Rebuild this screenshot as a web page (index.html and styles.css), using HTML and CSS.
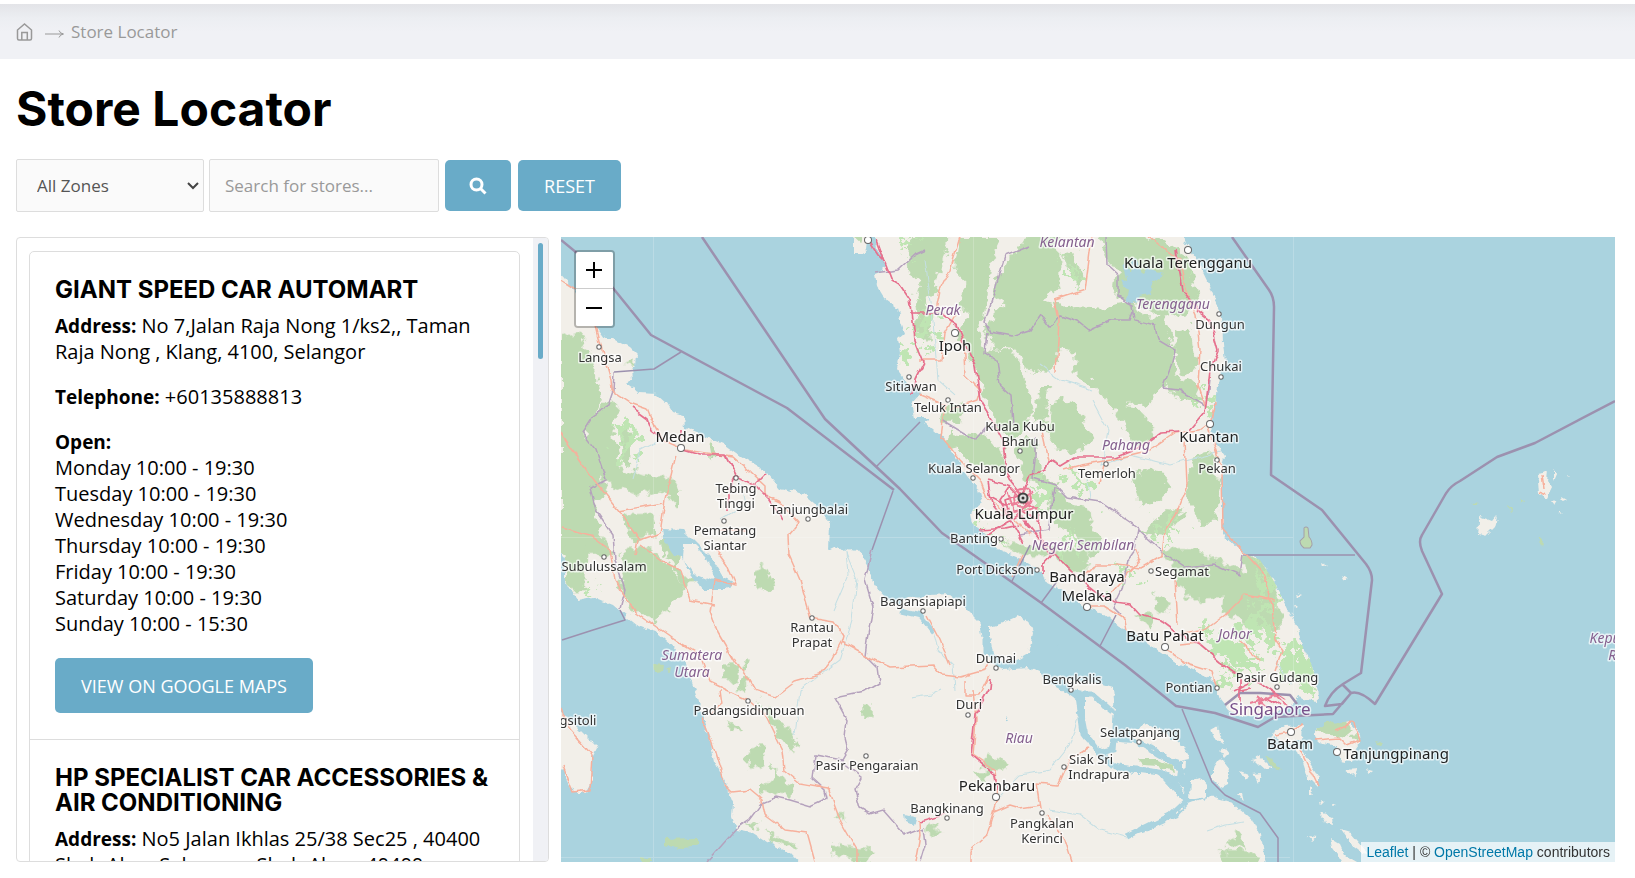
FILE: index.html
```html
<!DOCTYPE html>
<html lang="en">
<head>
<meta charset="utf-8">
<title>Store Locator</title>
<link rel="stylesheet" href="styles.css">
</head>
<body>
<nav class="breadcrumb" aria-label="Breadcrumb">
  <a class="home" href="#" aria-label="Home"><svg width="18" height="18" viewBox="0 0 18 18"><path d="M1.500 7 8.500 1l7 6v8.500q0 1.500-1.500 1.500H3q-1.500 0-1.500-1.500zM5.800 17V9.500h5.500V17"/></svg></a>
  <svg class="arrow" width="20" height="10" viewBox="0 0 20 10"><path d="M0 5h18M14 1.500Q15 4.500 18.500 5 15 5.500 14 8.500"/></svg>
  <a href="#">Store Locator</a>
</nav>
<main class="page">
  <h1>Store Locator</h1>
  <form class="filters">
    <div class="select-wrap">
      <select aria-label="Zone"><option>All Zones</option></select>
      <svg width="12" height="8" viewBox="0 0 12 8"><path d="m1 1 5 5 5-5"/></svg>
    </div>
    <input class="search" type="text" aria-label="Search" placeholder="Search for stores...">
    <button class="btn btn-search" type="button" aria-label="Search"><svg width="18" height="18" viewBox="0 0 18 18"><circle cx="7.500" cy="7.500" r="5.500"/><path d="m11.500 11.500 5 5"/></svg></button>
    <button class="btn btn-reset" type="reset">RESET</button>
  </form>
  <div class="locator">
    <section class="stores">
      <div class="store-scroll">
        <div class="store-list">
          <article class="store">
            <h2>GIANT SPEED CAR AUTOMART</h2>
            <p><b>Address:</b> No 7,Jalan Raja Nong 1/ks2,, Taman Raja Nong , Klang, 4100, Selangor</p>
            <p><b>Telephone:</b> +60135888813</p>
            <p><b>Open:</b><br>Monday 10:00 - 19:30<br>Tuesday 10:00 - 19:30<br>Wednesday 10:00 - 19:30<br>Thursday 10:00 - 19:30<br>Friday 10:00 - 19:30<br>Saturday 10:00 - 19:30<br>Sunday 10:00 - 15:30</p>
            <a class="btn btn-map" href="#">VIEW ON GOOGLE MAPS</a>
          </article>
          <article class="store">
            <h2>HP SPECIALIST CAR ACCESSORIES &amp; AIR CONDITIONING</h2>
            <p><b>Address:</b> No5 Jalan Ikhlas 25/38 Sec25 , 40400 Shah Alam Selangor , Shah Alam, 40400, Selangor</p>
          </article>
        </div>
      </div>
      <div class="track"><div class="thumb"></div></div>
    </section>
    <section class="map" aria-label="Map">
      <svg class="tiles" viewBox="561 237 1054 625" preserveAspectRatio="xMidYMid slice">
        <defs>
          <filter id="coast" x="-5%" y="-5%" width="110%" height="110%"><feTurbulence type="fractalNoise" baseFrequency=".12" numOctaves="3" seed="4"/><feDisplacementMap in="SourceGraphic" scale="7" xChannelSelector="R" yChannelSelector="G"/></filter>
          <filter id="wood" x="-5%" y="-5%" width="110%" height="110%"><feTurbulence type="fractalNoise" baseFrequency=".09" numOctaves="3" seed="9"/><feDisplacementMap in="SourceGraphic" scale="16" xChannelSelector="R" yChannelSelector="G"/></filter>
          <filter id="patchy" x="-5%" y="-5%" width="110%" height="110%"><feTurbulence type="fractalNoise" baseFrequency=".09" numOctaves="4" seed="5"/><feDisplacementMap in="SourceGraphic" scale="50" xChannelSelector="R" yChannelSelector="G"/></filter>
          <filter id="road" x="-5%" y="-5%" width="110%" height="110%"><feTurbulence type="fractalNoise" baseFrequency=".08" numOctaves="2" seed="2"/><feDisplacementMap in="SourceGraphic" scale="6" xChannelSelector="R" yChannelSelector="G"/></filter>
          <clipPath id="land">
            <path id="sumatra" d="M555 268 575 290 597 328 605 339 613 339 630 348 636 354 635 366 632 369 633 379 626 384 630 388 640 393 657 394 667 403 673 413 683 416 684 428 703 436 723 444 740 456 757 466 767 473 780 488 803 494 820 508 830 523 829 550 837 546 845 553 850 549 858 550 868 567 875 587 885 598 900 604 907 597 950 595 960 603 980 623 983 640 986 653 994 664 1003 669 1027 667 1040 673 1052 685 1067 693 1077 700 1078 713 1083 737 1097 753 1113 768 1133 774 1157 774 1170 783 1183 800 1185 807 1167 817 1140 828 1127 837 1153 828 1177 817 1190 803 1210 796 1233 803 1253 820 1260 836 1266 870 806 870 790 853 767 842 753 833 737 830 732 817 733 803 725 783 715 763 710 740 703 717 697 697 690 677 683 660 673 647 657 633 637 625 627 617 613 605 593 597 577 600 565 582 565 560 555 545Z"/>
            <path id="malaya" d="M875 230 877 249 885 261 883 271 875 274 877 286 885 299 897 308 900 319 905 333 898 339 900 353 897 369 907 383 918 389 920 394 912 403 915 418 930 418 925 423 940 436 953 453 967 476 978 489 982 503 970 513 972 523 988 536 1000 550 1023 560 1043 573 1047 583 1067 593 1083 607 1103 613 1120 627 1135 633 1153 647 1177 663 1200 673 1215 683 1220 700 1228 710 1237 716 1262 716 1290 708 1297 697 1307 700 1318 702 1317 683 1310 660 1302 645 1298 630 1287 607 1273 580 1260 560 1243 553 1222 533 1222 503 1222 476 1225 456 1213 439 1212 416 1215 403 1220 379 1225 363 1223 343 1222 316 1210 286 1197 259 1183 239 1180 230Z"/>
          </clipPath>
        </defs>
        <rect class="sea" x="0" y="0" width="2400" height="1400"/>
        <g class="land" filter="url(#coast)">
          <use href="#sumatra"/><use href="#malaya"/>
          <path d="M555 706 573 723 587 737 597 747 592 757 592 783 587 792 573 792 567 780 555 757ZM853 232H868L866 249 862 254 853 254ZM990 627 1000 624 1018 616 1028 620 1033 633 1029 653 1017 660 1003 662 993 653 990 637ZM1058 676 1085 682 1100 683 1113 687 1115 713 1103 703 1090 694 1073 690ZM1085 697H1093L1103 708 1115 717 1112 737 1107 752 1097 747 1088 733 1085 717ZM1105 755 1117 742 1133 743 1153 750 1167 763 1178 770 1177 778 1163 770 1133 767 1113 763ZM1133 737 1132 729 1147 725 1167 733 1183 747 1190 760 1180 762 1167 757 1153 745ZM1191 780 1200 777 1206 785 1206 796 1190 799ZM1213 768 1220 757 1230 770 1229 783 1221 787 1213 779ZM1220 752l5-4 4 5-5 5zM1211 730l7-4 1 9 5 8-10-4zM1182 762l4 1-1 12-3-3zM1178 783l8 11-3 1zM1252 759l9-4-1 12zM1253 775l8-1-3 10zM1238 793l6 8-2-8zM1240 772l8 3-3 5z"/>
          <path d="M1270 735 1285 726 1303 725 1302 738 1290 744 1280 741ZM1295 743 1306 757 1318 775 1318 788 1308 778 1303 763ZM1312 733 1325 725 1350 722 1360 733 1361 743 1355 752 1352 762 1341 760 1335 745 1318 741ZM1345 770l12-1-2 8zM1365 768l8 2-5 4zM1260 757l12 12-5 1-9-8zM1321 813l11 5 1 7-8-2zM1341 830l10 3 18 21-6-1-13-10zM1330 838l10 6 8 18h-6l-10-14zM1343 855l14 8-16 2zM1309 788l4 6-4-1zM1320 800l4 2-3 3zM1308 836l7 1-4 3zM1332 803l5 2-5 1z"/>
          <path d="M1537 474l7-1 4-2-1 9 5 8-5 10-8-4-1-14zM1553 470l3 4-3 7zM1480 516l13 5 4-5-3 12-8 8-8-2 1-12zM1552 501l6-1-3 5zM1562 497l5 3-4 2zM1559 511l4 3-4-1zM1568 475l3 3-3-1zM1343 575l5 3-2 3zM1297 593l5 2-4 2zM1293 603l4 3-3 1zM1322 562l5 3-4 1z"/>
        </g>
        <g clip-path="url(#land)">
          <g class="wood" filter="url(#wood)">
            <g transform="translate(900 236) scale(.33333)">
              <path d="M320 70 360 30 390-20H475V150L435 200 475 215 540 210 600 215 690 200 720 240 790 250 810 310 830 340 820 400 790 460 740 500 690 500 640 530 610 480 570 440 530 420 525 350 475 340 455 400 400 410 345 345 280 340 255 290 300 200 280 150ZM600-10H700L800 20 860 60 880 130 900 200 870 230 780 250 700 200 640 180 650 110 620 70ZM30 0H150L130 60 110 150 80 190 90 320 50 300 40 210 60 150 20 100ZM180 0H300L280 80 260 190 240 290 270 380 320 430 330 520 310 560 250 480 230 400 200 350 180 300 200 230 170 200 200 150 160 110ZM260 340 340 350 380 430 400 530 370 600 310 600 250 480ZM140 590 250 600 310 640 320 700 210 680 160 640ZM340 620 410 600 420 710 480 740 500 800 560 810 570 870 620 940 570 960 520 900 460 850 440 770 370 720ZM450 500 500 490 540 530 580 610 540 650 470 640 440 580ZM640 500 700 510 760 580 740 620 690 620ZM700 720 780 700 820 750 770 800 720 810ZM870 660 940 650 960 740 950 860 900 860 860 800ZM800 820 860 820 800 900 720 890ZM140 500 190 500 180 560 120 560ZM820 280 870 270 890 400 840 410ZM790 400 880 440 910 500 830 490ZM420 450 450 450 430 570 400 560ZM480 50 510 50 550 120 530 150Z"/>
            </g>
            <g transform="translate(560 236) scale(.33333)">
              <path d="M0 300 60 290 110 410 130 490 70 590 110 680 140 760 100 820 120 900 170 960 0 960 0 600ZM150 490 180 520 160 590 180 690 290 730 330 720 360 760 360 820 300 760 230 780 140 740 80 650 80 560ZM180 565 215 565 210 690 190 680ZM210 840 280 840 290 890 230 920 190 870ZM0 880 100 900 130 960 0 960ZM185 380 225 370 222 390ZM445 625 460 620 455 680ZM305 890 345 950 310 960Z"/>
            </g>
            <g transform="translate(560 550) scale(.33333)">
              <path d="M15-20H80L75 130 50 130 20 100ZM180 0 270-5 340 60 370 110 330 190 290 180 285 215 210 180 170 110 200 70ZM310-10 360-10 350 50 400 100 370 110ZM585 60 620 50 640 110 610 130 590 120ZM490 340H530V390H490ZM545 335H570L560 360ZM550 380 570 390 550 420 530 410ZM595 440 620 480 700 550 720 590 690 610 620 500ZM500 510 545 540 520 545ZM590 580H610V650H560V620ZM640 640 660 680 700 710 690 740 600 720 600 690 640 690ZM910 475H935V495H910ZM560 820 600 825 580 840ZM620 840 720 890 710 900 640 870ZM810 880 880 890 940 900 920 950 860 920 810 910ZM825 795H850V810Z"/>
            </g>
            <g transform="translate(900 550) scale(.33333)">
              <path d="M300-20 560 0 570 50 510 60 470 20 380 20ZM780 0 900 0 1040 70 1030 20 1120 0 1140 240 1070 240 970 190 980 140 860 150 830 80ZM770 130 810 150 790 200 765 180ZM700 200 760 200 750 225ZM290 265 325 280 330 320 300 300ZM260 610 320 640 310 660 250 660ZM80 820 130 850 85 860ZM1010 840 1050 900 980 890ZM960 900 1080 910 1080 950H970ZM220 660 270 660 250 700Z"/>
            </g>
          </g>
          <g class="grass" filter="url(#patchy)">
            <path d="M1260 560 1273 583 1276 600 1270 605 1262 590ZM1264 600 1270 640 1258 650 1246 630ZM1282 640 1297 645 1315 668 1318 695 1300 690 1284 672ZM1206 628 1240 635 1250 655 1262 670 1240 670 1215 655ZM1217 665 1235 675 1225 695ZM970 513 980 510 978 530 1006 556 995 550ZM905 340 914 345 906 362 898 355ZM900 240 915 245 904 255ZM1065 255 1082 275 1078 290ZM1190 275 1196 275 1196 284ZM1220 395 1215 415 1195 392ZM1030 480 1055 490 1040 515ZM1115 560 1135 580 1120 590ZM620 430 633 426 631 465 618 450ZM587 582 598 586 585 590ZM1060 470 1085 480 1090 500 1075 490ZM1150 530 1180 520 1170 545ZM1060 540 1085 545 1080 560ZM920 300 935 330 925 350Z"/>
          </g>
        </g>
        <g class="isles" filter="url(#coast)"><path d="M664 839 697 838 701 845 680 849 664 845ZM654 664l9 1-1 5-7 1zM665 667l7 1-1 4zM640 857l12 2v4h-12zM1537 537l6 3-1 6zM1508 505l4 3-2 5zM1472 502l8 2-3 2zM1522 499l4 3-4-1zM1316 731 1325 723 1345 722 1353 730 1343 738 1328 734ZM1350 735l8-1 1 8zM1265 755l8 5 7 10-8-3zM1376 741l6 2-3 3zM1138 759l20 0 15 8 1 5-16-6-14-1zM852 235l12-2-3 10z"/></g>
        <path class="tioman" d="M1304 528q2-2 4 0l1 9q3 3 3 8l-2 3h-6q-4-3-4-7l4-4z"/>
        <g class="water" filter="url(#coast)">
          <path d="M662 528 683 529 697 543 710 556 717 567 723 577 733 582 727 590 717 590 703 590 697 582 687 570 682 557 675 556 663 539Z"/>
          <path class="samosir" d="M684 545H694L706 557 715 575 710 580 693 573 683 560Z"/>
          <path d="M1122 262l8 10 2-14 6 4 4 12 4-2-2-8 8 6 10 4-8 6-4 14-10 2-4 6-10-2 2-10-8-8 6-2zM905 815l12 3-2 8-9-4zM1057 584l3 6-3 2zM1058 644l3 4-2 3zM1006 716l3 4-3 2z"/>
        </g>
        <g class="rivers" filter="url(#road)">
          <path class="strait" d="M900 611 921 616 933 632M1078 696 1083 733 1097 752 1113 767M1078 694H1092L1112 712M1116 716 1113 750 1100 753M1140 744 1165 759 1178 762 1183 775M1120 767 1160 772 1186 800 1170 815 1127 836M985 628V655"/>
          <path d="M933 630 938 650 953 665 955 690M845 550 857 580 852 620 840 660 800 690 795 735M846 553 848 575 833 610M1127 837 1100 830 1080 815 1050 810M1078 717 1070 745 1050 770 1020 775 1000 795M1092 400 1108 430 1102 465 1130 455 1170 465 1220 452M1092 390 1060 380 1040 365M1207 831 1225 825 1245 822M912 698 930 695 940 690M925 260 932 310 938 380 955 395M1090 500 1088 480M660 440 640 450 632 480M740 480 745 505 720 520M1277 660 1290 685"/>
        </g>
        <path class="grid" d="M653.500 237V862M973.500 237V862M1293.500 237V862M561 537.500H1293M561 857.500H1290"/>
        <g class="state" filter="url(#road)">
          <path d="M614 372 613 390 608 405 593 415 582 432 596 450 606 480 590 488 596 510 613 535 615 560 625 590 620 610M875 273 898 270 914 255 925 250M1030 246 1005 256 995 290 985 322 990 332 1012 336 1030 330 1040 315 1050 328 1060 316 1078 322 1088 330 1112 320 1130 320 1133 312M1106 237 1107 265 1118 275 1118 297 1133 305 1135 320 1155 325 1158 340 1175 350 1170 370 1163 388 1180 390 1205 405M987 332 985 352 997 360 1000 385 1011 395 1013 425M942 420 975 440 985 428 1005 425M1035 437 1035 460 1033 478 1055 485 1067 497 1100 502 1138 528 1135 550 1128 560 1122 590 1113 608 1120 615M1055 487 1048 530 1020 535M1138 530 1160 550 1185 567 1215 564 1240 575 1243 555"/>
          <path d="M872 550 865 580 873 607 867 640 865 655 878 668 880 683 865 692 835 698 847 720 845 738 848 750 842 760 815 755 812 778 825 790 827 798 810 806 790 800 777 797 762 803 750 819 738 827 707 862M842 762 862 778 855 790 860 808 870 814 883 810 905 835 923 828 925 845 920 862M1208 398 1210 380"/>
        </g>
        <g class="border">
          <path class="thin" d="M562 640 593 630 625 620 620 610M614 372 654 369 681 352M876 467 920 422M893 491 872 550M1012 581 1030 545M1041 603 1058 580M1100 646 1116 615M1182 709 1212 782 1225 795 1260 813 1278 838V862M1243 555H1355"/>
          <path d="M561 240 600 272 651 335 787 408 894 490M702 237 825 419 900 489 942 533 975 556 1040 602 1125 665 1176 706 1215 713 1258 727 1275 717 1333 714 1345 700 1352 692M1232 237 1269 290Q1274 297 1274 307L1271 475 1322 510 1366 564Q1372 572 1372 580L1361 673 1343 684Q1330 692 1325 706L1342 704 1351 693 1342 684M1351 693Q1360 690 1375 704L1442 594 1422 551Q1418 541 1422 535L1445 495Q1450 486 1460 481L1497 457 1535 443 1615 401M1225 705 1240 693 1260 693 1290 695 1297 704"/>
        </g>
        <g class="trunk" filter="url(#road)">
          <path d="M561 280 580 292 596 326 602 350 611 380 612 390 630 402 647 408 654 425 663 440 685 450 733 457 750 472 765 486 765 495 780 502 798 523 788 535 789 555 800 580 811 618 834 622 843 636 841 643 832 660 820 675 795 682 775 697 755 690 748 678 735 662 718 633 710 612 715 580 735 585 726 565 715 550M676 455 665 500 660 533 640 540 620 512 590 475 561 433M561 527 590 535 610 550 615 580 635 612 675 640 700 655 710 682 748 700 765 715 782 750 784 770 800 783 828 788 840 820 857 850 857 862M640 545 660 560 680 570 690 600 715 605M618 511 663 503M718 530 745 530M638 540 635 555M841 642 870 658 890 667 933 665 942 675 960 677 985 670 990 662M927 615 940 640 950 665M965 680V695H980L990 675M973 690 976 720 973 755 995 770 998 800 994 812 1010 805 1020 808 1040 805M994 810 987 835 970 850 970 862M1040 808 1036 783 1058 785 1069 760 1088 748M1046 815 1065 840 1072 862M919 820 920 835 915 862M720 690 722 705 710 715M702 717 713 745 725 785 732 792 750 790 762 800 765 815 785 830 807 833 815 862M561 708 570 730 592 755 590 790 573 792 563 765"/>
          <path d="M960 237 950 270 940 290 935 315M920 360 942 360 945 333 955 315M1056 372 1058 340 1059 320 1055 300 1070 295 1085 290 1092 237M1148 237 1170 252 1180 260 1185 290 1196 315 1200 350 1198 385 1205 405M963 335 965 375 980 390 977 400 950 410M920 395 945 405 941 436 960 460 980 480 988 500 1010 515 1030 535M1063 470 1080 465 1110 460 1150 450 1175 433 1200 430 1207 425M1185 440 1187 485 1175 515 1165 530 1162 555 1140 568 1118 565 1095 565 1085 575M1207 425 1222 470 1223 530 1245 553 1265 575 1272 605 1275 640 1282 650 1275 670M1178 635 1205 630 1225 615 1245 595 1275 600M1175 580 1178 625M1083 607 1105 607 1125 620 1127 630M1165 650 1190 665 1212 672 1218 690M1135 548 1140 560 1105 600M1042 432 1048 460M1100 483 1105 465M1210 425 1215 402M1022 555 1012 578M1240 643 1260 660M1180 645 1200 643"/>
          <path d="M1275 735 1290 732 1302 725M1300 750 1310 770 1318 787M1315 740 1340 738 1347 745 1360 740 1352 720 1345 728 1335 732M1543 475 1545 490M1538 492 1546 495"/>
        </g>
        <g class="motor" filter="url(#road)">
          <path d="M868 240 878 255 885 262 892 280 900 285 910 300 912 312 915 340 924 362 915 380 913 395M876 240 884 262M910 313H940L958 325 965 345 975 365 980 400 995 425 1003 440 1005 465 1010 480 1022 495M1022 495 1030 475 1045 470 1050 460 1060 466 1075 457 1115 457 1140 447 1160 433 1180 432M1190 430 1205 412 1210 370 1218 350 1210 320 1200 312 1182 290 1175 250M632 407 647 418 652 432 660 438M683 450 700 455 725 455 735 475 755 485 770 500 783 520M735 474 728 490 728 510M755 484 766 473M681 430V440M987 535 1020 515 1040 540 1050 555M1022 500 1038 510 1042 540 1065 565 1080 580 1095 592 1115 602 1130 604 1140 615 1160 620 1180 635 1200 645 1220 662 1240 675M988 482 992 505 1000 515 1020 510 1040 522M988 480 1008 485 1018 495 1005 500 1010 518 1023 542M990 497 1005 505 1025 505M980 530 1005 528 1018 525M1010 485 1000 500 1010 520M1030 500 1018 515 1030 530M1055 551 1042 565 1042 575M991 678 990 688 975 715 971 755 995 775 997 790M920 822 945 815"/>
          <path d="M1240 678V703M1235 690 1255 680 1270 690 1285 700M1240 690 1250 688M1258 705 1265 697 1280 706"/>
        </g>
        <g class="metro" filter="url(#road)"><circle cx="1023" cy="498" r="9"/><path d="M1015 488 1034 508M1013 506 1034 492M1008 492 1014 512 1038 508M1250 703 1275 695 1287 708M1256 697 1272 712"/></g>
        <g class="dots">
          <g><circle cx="599" cy="347" r="2.200"/><circle cx="736" cy="478" r="2.200"/><circle cx="724" cy="521" r="2.200"/><circle cx="808" cy="519" r="2.200"/><circle cx="604" cy="557" r="2.200"/><circle cx="812" cy="618" r="2.200"/><circle cx="748" cy="701" r="2.200"/><circle cx="866" cy="756" r="2.200"/><circle cx="909" cy="377" r="2.200"/><circle cx="948" cy="400" r="2.200"/><circle cx="1020" cy="451" r="2.200"/><circle cx="973" cy="478" r="2.200"/><circle cx="1001" cy="539" r="2.200"/><circle cx="1106" cy="464" r="2.200"/><circle cx="1217" cy="460" r="2.200"/><circle cx="1221" cy="377" r="2.200"/><circle cx="1219" cy="314" r="2.200"/><circle cx="1037" cy="570" r="2.200"/><circle cx="1151" cy="571" r="2.200"/><circle cx="923" cy="611" r="2.200"/><circle cx="996" cy="668" r="2.200"/><circle cx="968" cy="715" r="2.200"/><circle cx="1071" cy="690" r="2.200"/><circle cx="1139" cy="742" r="2.200"/><circle cx="1064" cy="767" r="2.200"/><circle cx="1042" cy="813" r="2.200"/><circle cx="947" cy="818" r="2.200"/><circle cx="1217" cy="688" r="2.200"/><circle cx="1277" cy="687" r="2.200"/></g>
          <g><circle cx="681" cy="448" r="3.500"/><circle cx="868" cy="240" r="3.500"/><circle cx="955" cy="333" r="3.500"/><circle cx="1188" cy="250" r="3.500"/><circle cx="1210" cy="424" r="3.500"/><circle cx="1087" cy="607" r="3.500"/><circle cx="1165" cy="647" r="3.500"/><circle cx="996" cy="797" r="3.500"/><circle cx="1291" cy="732" r="3.500"/><circle cx="1337" cy="752" r="3.500"/></g>
          <circle class="capital" cx="1023" cy="498" r="4.500"/><circle class="core" cx="1023" cy="498" r="1.500"/>
        </g>
        <g class="town">
          <text x="600" y="362">Langsa</text><text x="736" y="493">Tebing</text><text x="736" y="508">Tinggi</text><text x="809" y="514">Tanjungbalai</text><text x="725" y="535">Pematang</text><text x="725" y="550">Siantar</text><text x="604" y="571">Subulussalam</text><text x="812" y="632">Rantau</text><text x="812" y="647">Prapat</text><text x="749" y="715">Padangsidimpuan</text><text x="574" y="725">ngsitoli</text><text x="867" y="770">Pasir Pengaraian</text><text x="911" y="391">Sitiawan</text><text x="948" y="412">Teluk Intan</text><text x="1020" y="431">Kuala Kubu</text><text x="1020" y="446">Bharu</text><text x="974" y="473">Kuala Selangor</text><text x="974" y="543">Banting</text><text x="1107" y="478">Temerloh</text><text x="1217" y="473">Pekan</text><text x="1221" y="371">Chukai</text><text x="1220" y="329">Dungun</text><text x="995" y="574">Port Dickson</text><text x="1182" y="576">Segamat</text><text x="923" y="606">Bagansiapiapi</text><text x="996" y="663">Dumai</text><text x="969" y="709">Duri</text><text x="1072" y="684">Bengkalis</text><text x="1140" y="737">Selatpanjang</text><text x="1091" y="764">Siak Sri</text><text x="1099" y="779">Indrapura</text><text x="1042" y="828">Pangkalan</text><text x="1042" y="843">Kerinci</text><text x="947" y="813">Bangkinang</text><text x="1189" y="692">Pontian</text><text x="1277" y="682">Pasir Gudang</text>
        </g>
        <g class="city">
          <text x="680" y="442">Medan</text><text x="955" y="351">Ipoh</text><text x="1188" y="268">Kuala Terengganu</text><text x="1209" y="442">Kuantan</text><text x="1024" y="519">Kuala Lumpur</text><text x="1087" y="582">Bandaraya</text><text x="1087" y="601">Melaka</text><text x="1165" y="641">Batu Pahat</text><text x="997" y="791">Pekanbaru</text><text x="1290" y="749">Batam</text><text x="1396" y="759">Tanjungpinang</text>
        </g>
        <g class="region">
          <text x="1067" y="247">Kelantan</text><text x="943" y="315">Perak</text><text x="1173" y="309">Terengganu</text><text x="1126" y="450">Pahang</text><text x="1083" y="550">Negeri Sembilan</text><text x="1235" y="639">Johor</text><text x="1019" y="743">Riau</text><text x="692" y="660">Sumatera</text><text x="692" y="677">Utara</text><text x="1623" y="643">Kepulauan</text><text x="1622" y="660">Riau</text>
        </g>
        <text class="nation" x="1270" y="715">Singapore</text>
      </svg>
      <div class="zoom"><button type="button" aria-label="Zoom in"><svg width="16" height="16" viewBox="0 0 16 16"><path d="M0 8h16M8 0v16"/></svg></button><button type="button" aria-label="Zoom out"><svg width="16" height="16" viewBox="0 0 16 16"><path d="M0 8h16"/></svg></button></div>
      <div class="credit"><a href="#">Leaflet</a> | © <a href="#">OpenStreetMap</a> contributors</div>
    </section>
  </div>
</main>
</body>
</html>
```
FILE: styles.css
```css
* { box-sizing: border-box; }
body {
  margin: 0;
  height: 100vh;
  min-height: 600px;
  display: flex;
  flex-direction: column;
  background: #fff;
  color: #000;
  font: 20px/26px "Open Sans", sans-serif;
}
h1, h2, p { margin: 0; }
b { font-size: 19px; line-height: 1; }
svg { fill: none; stroke: currentColor; }
a { color: inherit; text-decoration: none; }

.breadcrumb {
  flex: none;
  display: flex;
  align-items: center;
  height: 55px;
  margin-top: 4px;
  padding: 0 16px;
  background: linear-gradient(#e3e4e8, #eceef2 14px, #f0f1f5 28px);
  color: #999;
  font-size: 17px;
}
.breadcrumb .home { display: flex; }
.home svg { stroke-width: 1.500; }
.arrow { margin: 4px 6px 0 11px; }

.page {
  flex: 1;
  min-height: 0;
  display: flex;
  flex-direction: column;
  padding: 22px 20px 16px 16px;
}
h1, h2 { font-family: Inter, "Open Sans", sans-serif; font-weight: 700; }
h1 { font-size: 48px; line-height: 56px; }

.filters { display: flex; align-items: center; margin: 22px 0 25px; }
.select-wrap { position: relative; width: 188px; margin-right: 5px; }
.select-wrap svg { position: absolute; right: 5px; top: 23px; color: #444; stroke-width: 2; pointer-events: none; }
select, .search {
  display: block;
  width: 100%;
  height: 53px;
  border: 1px solid #ddd;
  border-radius: 2px;
  background: #fafafa;
  color: #555;
  font: 17px/26px "Open Sans", sans-serif;
}
select { appearance: none; padding: 0 20px; }
.search { width: 230px; padding: 0 15px; margin-right: 6px; }
.search::placeholder { color: #999; opacity: 1; }
.btn {
  display: inline-flex;
  align-items: center;
  justify-content: center;
  height: 51px;
  border: 0;
  border-radius: 5px;
  background: #69abc8;
  color: #fff;
  font: 18px/26px "Open Sans", sans-serif;
}
.btn-search { width: 66px; margin-right: 7px; }
.btn-search svg { stroke-width: 3; }
.btn-reset { width: 103px; }

.locator { flex: 1; min-height: 0; display: flex; gap: 12px; }
.stores {
  flex: none;
  width: 33.333%;
  display: flex;
  border: 1px solid #ddd;
  border-radius: 4px;
  overflow: hidden;
}
.store-scroll { flex: 1; overflow-y: auto; scrollbar-width: none; padding: 13px 13px 13px 12px; }
.store-list { border: 1px solid #ddd; border-radius: 5px; }
.store { padding: 25px; }
.store + .store { border-top: 1px solid #ddd; }
.store h2 { font-size: 24px; line-height: 25px; margin-bottom: 11px; }
.store p { margin-bottom: 19px; }
.btn-map { display: flex; height: 55px; width: 258px; margin: 21px 0 1px; }
.track { flex: none; width: 15px; background: #f0f1f5; padding: 5px; }
.thumb { height: 116px; border-radius: 3px; background: #69abc8; }

.map { flex: 1; position: relative; overflow: hidden; background: #aad3df; }
.tiles { display: block; width: 100%; height: 100%; stroke: none; }
.sea, .water { fill: #aad3df; }
.land, .samosir { fill: #f2efe9; }
.wood { fill: #bddab1; }
.isles { fill: #bddab1; }
.tioman { fill: #bddab1; stroke: #a5a0a8; }
.grass { fill: #bfe5b3; }
.rivers { stroke: #c4dfe4; stroke-width: 1; }
.strait { stroke: #aad3df; stroke-width: 5; }
.grid { stroke: #fff; stroke-opacity: .2; }
.state { stroke: #b5a2bd; stroke-width: 1.500; }
.border { stroke: #9c91af; stroke-width: 2.500; stroke-linejoin: round; }
.border .thin { stroke-width: 1.500; }
.trunk { stroke: #f7b09c; stroke-width: 1.500; stroke-linejoin: round; }
.motor { stroke: #e6708d; stroke-width: 1.700; stroke-linejoin: round; }
.metro { stroke: #ec7f98; stroke-width: 2; }
.dots { fill: #fff; stroke: #666; stroke-width: 1; }
.capital { fill: #ddd; stroke: #444; stroke-width: 2; }
.core { fill: #333; stroke: none; }
.tiles text {
  font-family: "Noto Sans", sans-serif;
  text-anchor: middle;
  paint-order: stroke;
  stroke: #fff;
  stroke-opacity: .7;
  stroke-width: 3px;
  stroke-linejoin: round;
}
.town { font-size: 13px; fill: #333; }
.city { font-size: 15px; fill: #222; }
.region { font-size: 14px; font-style: italic; fill: #85608f; }
.nation { font-size: 17px; fill: #78508a; }

.zoom {
  position: absolute;
  left: 13px;
  top: 13px;
  border: 2px solid rgba(0, 0, 0, .25);
  border-radius: 4px;
  background-clip: padding-box;
}
.zoom button {
  display: flex;
  align-items: center;
  justify-content: center;
  width: 37px;
  height: 37px;
  padding: 0;
  border: 0;
  background: #fff;
  color: #000;
}
.zoom button:first-child { border-bottom: 1px solid #ccc; border-radius: 2px 2px 0 0; }
.zoom button:last-child { border-radius: 0 0 2px 2px; }
.zoom svg { stroke-width: 2; }
.credit {
  position: absolute;
  right: 0;
  bottom: 0;
  padding: 0 5px;
  background: rgba(255, 255, 255, .7);
  color: #333;
  font: 14px/20px "Liberation Sans", Arial, sans-serif;
}
.credit a { color: #0078a8; }
```
